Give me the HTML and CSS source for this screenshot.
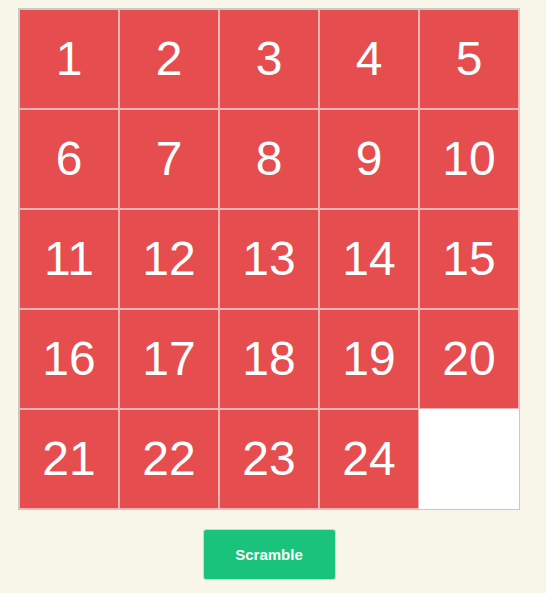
FILE: index.html
```html
<!DOCTYPE html>
<html>
<head>
<meta charset="utf-8">
<link rel="stylesheet" href="styles.css">
</head>
<body>
<div class="game">
  <div class="board">
    <div class="tile">1</div><div class="tile">2</div><div class="tile">3</div><div class="tile">4</div><div class="tile">5</div>
    <div class="tile">6</div><div class="tile">7</div><div class="tile">8</div><div class="tile">9</div><div class="tile">10</div>
    <div class="tile">11</div><div class="tile">12</div><div class="tile">13</div><div class="tile">14</div><div class="tile">15</div>
    <div class="tile">16</div><div class="tile">17</div><div class="tile">18</div><div class="tile">19</div><div class="tile">20</div>
    <div class="tile">21</div><div class="tile">22</div><div class="tile">23</div><div class="tile">24</div><div class="tile empty"></div>
  </div>
  <div class="controls">
    <button class="scramble">Scramble</button>
  </div>
</div>
</body>
</html>
```
FILE: styles.css
```css
html, body {
  margin: 0;
  padding: 0;
  background: #f8f6e9;
}
body {
  padding: 8px 0 0 18px;
  font-family: "Liberation Sans", Arial, sans-serif;
}
.game {
  width: 502px;
}
.board {
  display: grid;
  grid-template-columns: repeat(5, 100px);
  grid-template-rows: repeat(5, 100px);
  border: 1px solid #cbcbc6;
  width: 500px;
  background: #fff;
}
.tile {
  box-sizing: border-box;
  border: 1px solid #f3b4b4;
  background: #e54d4e;
  color: #fff;
  font-size: 48px;
  display: flex;
  align-items: center;
  justify-content: center;
  line-height: 1;
}
.tile.empty {
  background: #fff;
  border-color: #fff;
}
.controls {
  display: flex;
  justify-content: center;
  padding-top: 19px;
}
.scramble {
  width: 133px;
  height: 51px;
  box-sizing: border-box;
  background: #19c37b;
  color: #fff;
  border: 1px solid #d6d6d0;
  border-radius: 3px;
  font-family: "Liberation Sans", Arial, sans-serif;
  font-size: 15px;
  font-weight: bold;
  padding: 0;
}
```
